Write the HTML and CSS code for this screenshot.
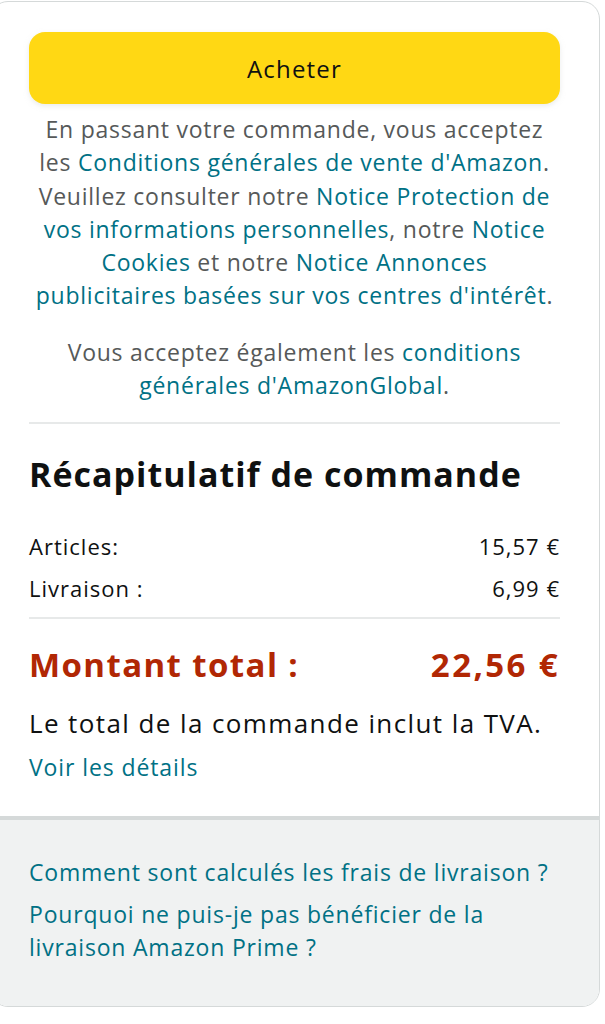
FILE: index.html
```html
<!DOCTYPE html>
<html lang="fr">
<head>
<meta charset="utf-8">
<title>Récapitulatif de commande</title>
<link rel="stylesheet" href="styles.css">
</head>
<body>
<div class="card">
  <div class="main">
    <button class="buy">Acheter</button>
    <p class="legal">En passant votre commande, vous acceptez<br>les <a href="#">Conditions générales de vente d'Amazon</a>.<br>Veuillez consulter notre <a href="#">Notice Protection de<br>vos informations personnelles</a>, notre <a href="#">Notice<br>Cookies</a> et notre <a href="#">Notice Annonces<br>publicitaires basées sur vos centres d'intérêt</a>.</p>
    <p class="legal legal2">Vous acceptez également les <a href="#">conditions<br>générales d'AmazonGlobal</a>.</p>
    <hr class="sep">
    <h2 class="title">Récapitulatif de commande</h2>
    <div class="rows">
      <div class="row"><span>Articles:</span><span>15,57 €</span></div>
      <div class="row"><span>Livraison :</span><span>6,99 €</span></div>
    </div>
    <hr class="sep sep2">
    <div class="total"><span>Montant total :</span><span class="amount">22,56 €</span></div>
    <p class="vat">Le total de la commande inclut la TVA.</p>
    <a class="details" href="#">Voir les détails</a>
  </div>
  <div class="foot">
    <a href="#">Comment sont calculés les frais de livraison ?</a>
    <a href="#">Pourquoi ne puis-je pas bénéficier de la<br>livraison Amazon Prime ?</a>
  </div>
</div>
</body>
</html>
```
FILE: styles.css
```css
html, body { margin: 0; padding: 0; background: #fff; }
body {
  font-family: "Open Sans", "Noto Sans", sans-serif;
  color: #0f1111;
  width: 605px;
  overflow: hidden;
}
a { color: #007185; text-decoration: none; }
.card {
  margin: 1px 0 0 -10px;
  width: 610px;
  box-sizing: border-box;
  border: 1px solid #d5d9d9;
  border-radius: 18px;
  overflow: hidden;
  background: #fff;
}
.main { padding: 30px 39px 34px 38px; }
.buy {
  display: block;
  width: 100%;
  height: 72px;
  border: none;
  border-radius: 16px;
  background: #ffd814;
  font-family: inherit;
  font-size: 24px;
  letter-spacing: 1.2px;
  color: #0f1111;
  box-shadow: 0 2px 5px rgba(213,217,217,.5);
}
.legal {
  margin: 9px -10px 0;
  text-align: center;
  font-size: 23px;
  letter-spacing: 0.75px;
  line-height: 33.3px;
  color: #565959;
  white-space: nowrap;
}
.legal2 { margin-top: 23px; }
.sep { margin: 20px 0 0; border: 0; height: 2px; background: #e7e9e9; }
.title {
  margin: 30px 0 0;
  font-size: 34px; line-height: 40px; font-weight: 700;
  letter-spacing: 1px;
}
.rows { margin-top: 37px; display: flex; flex-direction: column; gap: 12px; }
.row {
  display: flex; justify-content: space-between;
  font-size: 22px; line-height: 30px; letter-spacing: 1px;
}
.sep2 { margin-top: 14px; }
.total {
  margin-top: 26px;
  display: flex; justify-content: space-between;
  font-size: 33px; line-height: 40px; font-weight: 700;
  letter-spacing: 1.4px;
  color: #b12704;
}
.amount { letter-spacing: 2.4px; }
.vat {
  margin: 21px 0 0;
  font-size: 26px; line-height: 34px; letter-spacing: 1.4px;
  white-space: nowrap;
}
.details {
  display: block; margin-top: 12px;
  font-size: 23px; line-height: 30px; letter-spacing: 0.9px;
}
.foot {
  border-top: 4px solid #d5d9d9;
  background: #f0f2f2;
  padding: 36px 39px 42px 38px;
  display: flex; flex-direction: column; gap: 9px;
}
.foot a {
  font-size: 23px; line-height: 33px; letter-spacing: 0.8px;
  white-space: nowrap;
}
```
